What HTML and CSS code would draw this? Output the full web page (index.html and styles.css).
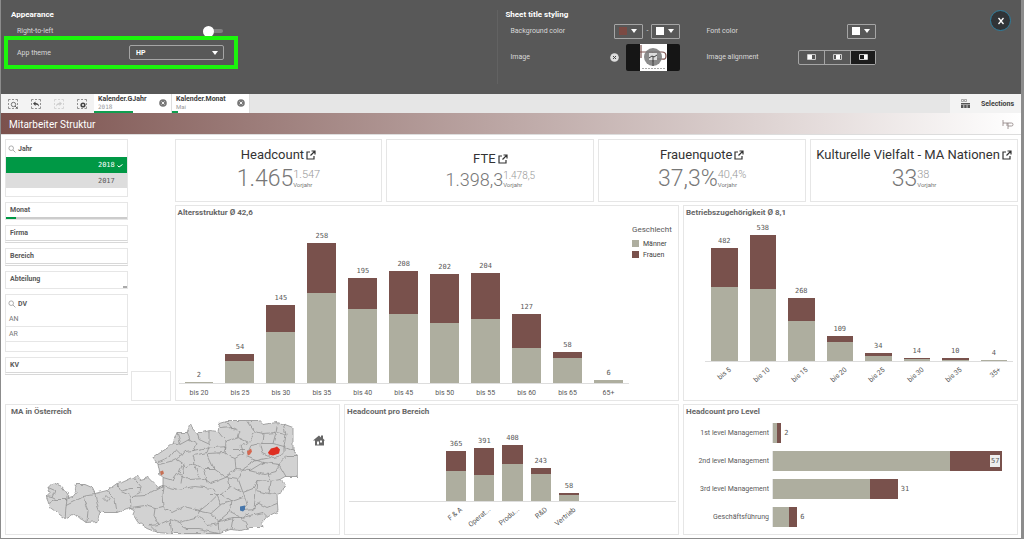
FILE: index.html
```html
<!DOCTYPE html>
<html lang="de">
<head>
<meta charset="utf-8">
<title>Mitarbeiter Struktur</title>
<link rel="stylesheet" href="styles.css">
</head>
<body>
<svg class="defs" aria-hidden="true">
  <symbol id="search" viewBox="0 0 8 8"><circle cx="3.2" cy="3.2" r="2.3" fill="none" stroke="currentColor" stroke-width=".8"/><path d="M5 5l2.4 2.4" stroke="currentColor" stroke-width=".8"/></symbol>
  <symbol id="open" viewBox="0 0 10 10"><path d="M4 2H1v7h7V6M5.500 1H9v3.500M9 1L4.500 5.500" fill="none" stroke="currentColor" stroke-width="1.2"/></symbol>
  <symbol id="frame" viewBox="0 0 10 10"><path d="M.5 2.500v-2h2M4 .5h2M7.500 .5h2v2M9.500 4v2M9.500 7.500v2h-2M6 9.500H4M2.500 9.500h-2v-2M.5 6V4" fill="none" stroke="currentColor" stroke-width=".8"/></symbol>
  <symbol id="clear" viewBox="0 0 8 8"><circle cx="4" cy="4" r="3.800" fill="currentColor"/><path d="M2.600 2.600l2.800 2.800M5.400 2.600L2.600 5.400" stroke="#fff" stroke-width=".9"/></symbol>
</svg>

<header class="settings">
  <section class="appearance">
    <h2>Appearance</h2>
    <div class="field rtl"><label for="rtl">Right-to-left</label><input id="rtl" class="switch" type="checkbox"></div>
    <div class="highlight field">
      <label for="theme">App theme</label>
      <span class="select"><select id="theme"><option>HP</option></select></span>
    </div>
  </section>
  <section class="styling">
    <h2>Sheet title styling</h2>
    <div class="fields">
      <div class="field"><span>Background color</span>
        <div class="group"><button class="color" aria-label="Start color"><i class="swatch brown"></i><i class="caret"></i></button><span>-</span><button class="color" aria-label="End color"><i class="swatch"></i><i class="caret"></i></button></div>
      </div>
      <div class="field"><span>Font color</span><button class="color" aria-label="Font color"><i class="swatch"></i><i class="caret"></i></button></div>
      <div class="field"><span>Image</span>
        <div class="group image">
          <button class="plain" aria-label="Remove image"><svg width="9" height="9" viewBox="0 0 9 9"><circle cx="4.500" cy="4.500" r="4.300" fill="#ddd"/><path d="M3 3l3 3M6 3L3 6" stroke="#444"/></svg></button>
          <button class="thumb" aria-label="Choose image"><svg width="27" height="27" viewBox="0 0 27 27"><path fill="#fff" d="M0 0h27v27H0z"/><path d="M1 1v13M0 8h13v10M14 8h8q4 0 4 4t-4 3h-9" fill="none" stroke="#7b514d" stroke-width="1.200"/><circle cx="13" cy="13" r="9" fill="#777" opacity=".85"/><path d="M9 9h8v7H9z" fill="#ddd"/><path d="M9 14l3-2 2 1 3-2M13 12v10" stroke="#444" fill="none"/><path d="M2 24.500h23" stroke="#aaa" stroke-dasharray="2 1"/></svg></button>
        </div>
      </div>
      <div class="field"><span>Image alignment</span>
        <div class="segments">
          <button aria-label="Left"><svg width="9" height="6"><path d="M.5 .5h8v5h-8z" fill="none" stroke="#ccc"/><path d="M1 1h4v4H1z" fill="#fff"/></svg></button>
          <button aria-label="Center"><svg width="9" height="6"><path d="M.5 .5h8v5h-8z" fill="none" stroke="#ccc"/><path d="M3 1h4v4H3z" fill="#fff"/></svg></button>
          <button class="on" aria-label="Right"><svg width="9" height="6"><path d="M.5 .5h8v5h-8z" fill="none" stroke="#ccc"/><path d="M5 1h3v4H5z" fill="#fff"/></svg></button>
        </div>
      </div>
    </div>
  </section>
  <button class="close" aria-label="Close"><svg width="8" height="8" viewBox="0 0 8 8"><path d="M1.500 1l5 6M6.500 1l-5 6" stroke="#fff" stroke-width="1.300"/></svg></button>
</header>

<nav class="selections">
  <div class="tools">
    <button class="plain" aria-label="Smart search"><svg width="10" height="10"><use href="#frame"/><circle cx="5.500" cy="5.500" r="2.200" fill="#f3f3f3" stroke="#666" stroke-width=".9"/><path d="M7 7l2.500 2.500" stroke="#666"/></svg></button>
    <button class="plain" aria-label="Step back"><svg width="10" height="10"><use href="#frame"/><path d="M2 4.500L4.500 2.500V4q3.500 0 3.500 3.500Q7 5.500 4.500 5.500V7z" fill="#444"/></svg></button>
    <button class="plain faint" aria-label="Step forward"><svg width="10" height="10"><use href="#frame"/><path d="M8 4.500L5.500 2.500V4Q2 4 2 7.500q1-2 3.500-2V7z" fill="currentColor"/></svg></button>
    <button class="plain" aria-label="Clear all"><svg width="10" height="10"><use href="#frame"/><circle cx="6" cy="6" r="2.600" fill="#444"/><path d="M5 5l2 2M7 5L5 7" stroke="#fff" stroke-width=".7"/></svg></button>
  </div>
  <div class="pick"><div><b>Kalender.GJahr</b><small class="mono">2018</small></div><button class="plain" aria-label="Clear year"><svg width="8" height="8"><use href="#clear"/></svg></button><i class="half"></i></div>
  <div class="pick"><div><b>Kalender.Monat</b><small>Mai</small></div><button class="plain" aria-label="Clear month"><svg width="8" height="8"><use href="#clear"/></svg></button><i class="twelfth"></i></div>
  <button class="all"><svg width="9" height="9" viewBox="0 0 9 9"><path d="M.5 .5h2v2h-2zM3.500 .5h2v2h-2z" fill="none" stroke="#888" stroke-width=".7"/><path d="M0 4h9v1.500H0zM0 6h2.500v3H0zM3.200 6h2.500v3H3.200zM6.400 6H9v3H6.400z" fill="#555"/></svg>Selections</button>
</nav>

<div class="titlebar">
  <h1>Mitarbeiter Struktur</h1>
  <svg width="12" height="9" viewBox="0 0 12 9"><path d="M1 0v6M1 3h5M6 9V3h3.500Q11 3 11 4.500T9.500 6H6M5 3v3" fill="none" stroke="#8b7f7d" stroke-width=".8"/></svg>
</div>

<main class="sheet">
  <aside class="side">
    <div class="filters">
      <section class="list card">
        <h3><svg width="8" height="8"><use href="#search"/></svg>Jahr</h3>
        <button class="year mono sel">2018<svg width="6" height="5" viewBox="0 0 6 5"><path d="M.5 2.500L2 4l3.500-2.500" stroke="#fff" fill="none"/></svg></button>
        <button class="year mono alt">2017</button>
      </section>
      <button class="filter card">Monat<i class="meter"></i></button>
      <button class="filter card line">Firma</button>
      <button class="filter card line">Bereich</button>
      <button class="filter card stub">Abteilung</button>
      <section class="list card">
        <h3><svg width="8" height="8"><use href="#search"/></svg>DV</h3>
        <button class="item">AN</button>
        <button class="item">AR</button>
      </section>
      <button class="filter card line">KV</button>
    </div>
    <div class="blank card"></div>
  </aside>

  <section class="kpis">
    <article class="kpi card"><h2>Headcount<svg width="10" height="10"><use href="#open"/></svg></h2><div class="num"><strong>1.465</strong><span><em>1.547</em><small>Vorjahr</small></span></div></article>
    <article class="kpi card medium"><h2>FTE<svg width="10" height="10"><use href="#open"/></svg></h2><div class="num"><strong>1.398,3</strong><span><em>1.478,5</em><small>Vorjahr</small></span></div></article>
    <article class="kpi card"><h2>Frauenquote<svg width="10" height="10"><use href="#open"/></svg></h2><div class="num"><strong>37,3%</strong><span><em>40,4%</em><small>Vorjahr</small></span></div></article>
    <article class="kpi card"><h2>Kulturelle Vielfalt - MA Nationen<svg width="10" height="10"><use href="#open"/></svg></h2><div class="num"><strong>33</strong><span><em>38</em><small>Vorjahr</small></span></div></article>
  </section>

  <section class="card chart age">
    <h2>Altersstruktur Ø 42,6</h2>
    <div class="with-legend">
      <div class="bars">
        <div class="plot mono">
          <div><span>2</span><i class="m" style="height:0.600%"></i></div>
          <div><span>54</span><i class="f" style="height:4.300%"></i><i class="m" style="height:13.600%"></i></div>
          <div><span>145</span><i class="f" style="height:17.100%"></i><i class="m" style="height:31.300%"></i></div>
          <div><span>258</span><i class="f" style="height:30.900%"></i><i class="m" style="height:55.300%"></i></div>
          <div><span>195</span><i class="f" style="height:19.300%"></i><i class="m" style="height:45.700%"></i></div>
          <div><span>208</span><i class="f" style="height:26.400%"></i><i class="m" style="height:42.900%"></i></div>
          <div><span>202</span><i class="f" style="height:30.300%"></i><i class="m" style="height:37%"></i></div>
          <div><span>204</span><i class="f" style="height:28.200%"></i><i class="m" style="height:39.800%"></i></div>
          <div><span>127</span><i class="f" style="height:20.500%"></i><i class="m" style="height:21.800%"></i></div>
          <div><span>58</span><i class="f" style="height:3.900%"></i><i class="m" style="height:15.200%"></i></div>
          <div><span>6</span><i class="m" style="height:1.800%"></i></div>
        </div>
        <div class="ticks"><span>bis 20</span><span>bis 25</span><span>bis 30</span><span>bis 35</span><span>bis 40</span><span>bis 45</span><span>bis 50</span><span>bis 55</span><span>bis 60</span><span>bis 65</span><span>65+</span></div>
      </div>
      <ul class="legend"><li class="head">Geschlecht</li><li><i class="m"></i>Männer</li><li><i class="f"></i>Frauen</li></ul>
    </div>
  </section>

  <section class="card chart tenure">
    <h2>Betriebszugehörigkeit Ø 8,1</h2>
    <div class="bars">
      <div class="plot mono">
        <div><span>482</span><i class="f" style="height:27.500%"></i><i class="m" style="height:53%"></i></div>
        <div><span>538</span><i class="f" style="height:38.500%"></i><i class="m" style="height:51.400%"></i></div>
        <div><span>268</span><i class="f" style="height:16.200%"></i><i class="m" style="height:28.700%"></i></div>
        <div><span>109</span><i class="f" style="height:4.700%"></i><i class="m" style="height:13.400%"></i></div>
        <div><span>34</span><i class="f" style="height:2.100%"></i><i class="m" style="height:3.700%"></i></div>
        <div><span>14</span><i class="f" style="height:0.700%"></i><i class="m" style="height:1.600%"></i></div>
        <div><span>10</span><i class="f" style="height:0.900%"></i><i class="m" style="height:1%"></i></div>
        <div><span>4</span><i class="f" style="height:0.500%"></i><i class="m" style="height:0.400%"></i></div>
      </div>
      <div class="ticks slanted"><span><b>bis 5</b></span><span><b>bis 10</b></span><span><b>bis 15</b></span><span><b>bis 20</b></span><span><b>bis 25</b></span><span><b>bis 30</b></span><span><b>bis 35</b></span><span><b>35+</b></span></div>
    </div>
  </section>

  <section class="card chart map">
    <h2>MA in Österreich</h2>
    <svg class="austria" viewBox="6 420 333 114" role="img" aria-label="Karte von Österreich">
      <filter id="rough" x="0" y="0" width="1" height="1"><feTurbulence type="fractalNoise" baseFrequency=".15" numOctaves="2" seed="4"/><feDisplacementMap in="SourceGraphic" scale="4" xChannelSelector="R" yChannelSelector="G"/></filter>
      <g filter="url(#rough)" stroke="#929292" stroke-width=".8" stroke-linejoin="round">
        <path fill="#d2d2d2" d="M46 497L50 493 48 488 53 483 62 487 68 495 67 498 73 497 77 492 75 485 85 485 92 488 95 494 107 491 117 484 122 483 133 478 137 477 140 480 148 478 153 483 157 488 163 486 163 478 160 475 158 465 153 458 162 452 168 448 173 443 177 433 187 433 190 425 197 433 202 433 210 431 218 432 220 423 227 421 258 421 262 425 277 423 285 425 293 428 293 450 298 458 298 477 285 477 280 480 285 485 282 493 277 495 278 512 267 517 262 523 263 528 250 528 240 531 230 530 220 534 170 534 157 533 147 529 138 523 133 515 135 510 131 508 117 513 100 513 97 522 87 523 83 520 72 515 65 519 50 508 48 502Z"/>
        <path fill="none" d="M48 488L55 491 52 498 46 497M52 498L56 500 67 500M56 500L49 504M67 498L66 508 65 519M66 506L80 499 83 496 95 494M83 496L85 504 88 511 87 523M95 494L97 505 100 513M106 496L109 499 107 502 104 499ZM107 491L115 500 117 513M117 484L121 492 130 496 131 508M122 492L130 489 140 489M133 478L141 487 140 493 132 497M132 497L145 496 163 486M131 508L145 506 155 509 163 507M163 486L162 496 163 507M155 509L154 516 159 525 150 526 157 533M163 507L172 513 184 507 200 511 195 519 179 523 170 520 159 525M170 520L172 534M163 486L178 490 194 487 214 489 217 496 210 503 200 511M163 478L173 481 178 474 190 480 204 479 211 484 228 477 230 487 221 495 210 495M158 465L170 462 176 459 183 464 179 473M158 462L170 457 176 450 182 456 176 459M173 443L181 445 190 440 197 444 194 451 185 452 182 456M177 433L181 445M190 440L187 433M197 433L199 440 210 445 207 453 193 456 195 463 185 469M193 451L203 449 226 447 224 453 208 454M209 431L209 444M218 432L226 442 238 438 240 432 232 428 220 429M238 438L249 443 255 432 248 422M255 432L263 434 262 444 251 446M263 434L276 433 273 444 262 444M276 433L278 424M276 433L286 435 283 424M286 435L284 447 294 451M273 444L284 447 284 455 273 458 262 453 260 446M226 442L225 455 235 459 243 454 240 446 249 443M251 446L246 457 256 461 271 458M235 459L236 470 225 477 214 469 207 454M214 469L203 469 194 464 199 478M225 477L238 479 244 469 256 461M236 470L250 471 263 463 256 461M263 463L279 465 276 472 265 475 249 471M279 465L287 457 297 457M279 465L286 477M238 479L243 493 253 489 257 481 270 482 268 473M257 481L256 491 268 494 270 482 280 480M268 494L277 495M256 491L255 502 267 508 277 504M243 493L247 505 243 510 254 509 255 502M243 493L230 487M221 495L232 502 243 498M217 496L221 505 232 502 230 512 242 518 253 510M221 505L211 514 218 522 230 512M211 514L197 511M218 522L219 534M218 522L233 518 231 530M233 518L242 518 248 529M242 518L263 513 267 517M253 510L260 502M179 523L185 530 199 530 218 534M184 464L181 484M203 469L207 483M226 421L234 431M232 450L246 450M199 516L208 526 219 524"/>
      </g>
      <path fill="#df2f22" d="M268 453l3-4 4-1 2-1 3 3-1 4-6 2-4-1z"/><path fill="#d56850" d="M247 452l4-3 1 3-2 3-2 1z"/><path fill="#c76f54" d="M160 472l3-1 1 3-3 2z"/><path fill="#4676ab" d="M240 507l5-1v4l-2 2-3-1z"/>
      <path fill="#666" d="M313 441l6-5 2 2v-2h2v3l2 2h-1v5h-9v-5zM317 442v3h2v-3zM320 441v2h2v-2z" fill-rule="evenodd"/>
    </svg>
  </section>

  <section class="card chart area">
    <h2>Headcount pro Bereich</h2>
    <div class="bars">
      <div class="plot mono">
        <div><span>365</span><i class="f" style="height:25%"></i><i class="m" style="height:36.600%"></i></div>
        <div><span>391</span><i class="f" style="height:33.300%"></i><i class="m" style="height:32.500%"></i></div>
        <div><span>408</span><i class="f" style="height:22.600%"></i><i class="m" style="height:46%"></i></div>
        <div><span>243</span><i class="f" style="height:7.400%"></i><i class="m" style="height:33.700%"></i></div>
        <div><span>58</span><i class="f" style="height:3%"></i><i class="m" style="height:7%"></i></div>
      </div>
      <div class="ticks slanted"><span><b>F &amp; A</b></span><span><b>Operat...</b></span><span><b>Produ...</b></span><span><b>R&amp;D</b></span><span><b>Vertrieb</b></span></div>
    </div>
  </section>

  <section class="card chart level">
    <h2>Headcount pro Level</h2>
    <div class="rows">
      <span>1st level Management</span><div><i class="m" style="width:1.700%"></i><i class="f" style="width:1.700%"></i><b>2</b></div>
      <span>2nd level Management</span><div><i class="m" style="width:73.900%"></i><i class="f" style="width:21.700%"><b>57</b></i></div>
      <span>3rd level Management</span><div><i class="m" style="width:40.300%"></i><i class="f" style="width:11.700%"></i><b>31</b></div>
      <span>Geschäftsführung</span><div><i class="m" style="width:6.700%"></i><i class="f" style="width:3.400%"></i><b>6</b></div>
    </div>
  </section>
</main>
</body>
</html>
```
FILE: styles.css
```css
* { box-sizing: border-box; }
body {
  margin: 0;
  min-height: 100vh;
  display: flex;
  flex-direction: column;
  border: solid #8c8c8c;
  border-width: 0 3px 1px 1px;
  background: #fff;
  color: #595959;
  font: 7px/10px Roboto, "Liberation Sans", sans-serif;
}
h1, h2, h3, ul { margin: 0; padding: 0; font-size: inherit; list-style: none; }
button, select, input { margin: 0; padding: 0; border: 0; background: none; color: inherit; font: inherit; }
svg { display: block; flex: none; }
i, em { font-style: normal; }
.defs { position: absolute; width: 0; height: 0; }
.mono { font-family: "DejaVu Sans Mono", monospace; }
.plain { display: flex; }

/* settings panel */
.settings {
  position: relative;
  display: grid;
  grid-template-columns: 49fr 52fr;
  height: 94px;
  padding: 10px 0 10px 3px;
  background: #585858;
  color: #d8d8d8;
}
.settings h2 { color: #fff; font-size: 8px; }
.field { display: flex; align-items: center; justify-content: space-between; }
.appearance h2 { padding-left: 7px; }
.rtl { width: 219px; height: 16px; padding-left: 13px; margin-top: 3px; }
.switch { appearance: none; display: flex; align-items: center; width: 20px; height: 4px; border-radius: 2px; background: #808080; }
.switch::before { content: ""; width: 11px; height: 11px; border-radius: 50%; background: #fff; }
.highlight { position: relative; width: 234px; height: 33px; margin-top: -3px; padding: 0 10px 0 9px; border: 4px solid #1cf50c; }
.select { position: relative; width: 95px; }
.select select { appearance: none; width: 100%; height: 15px; padding-left: 6px; border: 1px solid #a5a5a5; border-radius: 2px; color: #fff; font-weight: bold; }
.select::after { content: ""; position: absolute; right: 6px; top: 6px; border: solid transparent; border-width: 4px 3px 0; border-top-color: #fff; }
.styling { border-left: 1px solid #626262; padding-left: 7px; }
.fields { display: grid; grid-template-columns: 170px 170px; grid-template-rows: 22px 28px; gap: 1px 26px; padding: 0 0 0 5px; }
.group { display: flex; align-items: center; gap: 3px; }
.group.image { gap: 7px; }
.color { display: flex; align-items: center; justify-content: space-between; width: 29px; height: 15px; padding: 0 5px 0 4px; border: 1px solid #a5a5a5; border-radius: 1px; }
.swatch { width: 8px; height: 8px; background: #fff; }
.swatch.brown { background: #7b4a43; }
.caret { border: solid transparent; border-width: 4px 3px 0; border-top-color: #fff; }
.thumb { display: flex; justify-content: center; width: 54px; height: 27px; border-radius: 2px; background: #151515; }
.segments { display: flex; width: 78px; height: 15px; border: 1px solid #a5a5a5; border-radius: 2px; }
.segments button { flex: 1; display: flex; align-items: center; justify-content: center; border-right: 1px solid #a5a5a5; }
.segments .on { border: 0; background: #1c1c1c; }
.close { position: absolute; right: 10px; top: 10px; display: flex; align-items: center; justify-content: center; width: 21px; height: 21px; border: 1px solid #2f7f9f; border-radius: 50%; background: #303437; }

/* selections bar */
.selections { display: flex; height: 19px; background: #e6e6e6; }
.tools { display: flex; align-items: center; justify-content: space-between; width: 93px; padding: 0 7px; background: #f3f3f3; color: #777; }
.faint { color: #ccc; }
.pick { position: relative; display: flex; align-items: center; justify-content: space-between; width: 78px; padding: 0 4px 1px 4px; border-right: 1px solid #ddd; background: #fff; color: #777; }
.pick b, .pick small { display: block; line-height: 7px; }
.pick b { color: #404040; }
.pick small { font-size: 6px; color: #999; }
.pick i { position: absolute; left: 0; bottom: 0; height: 2px; background: #109e50; }
.half { width: 50%; }
.twelfth { width: 8%; }
.all { display: flex; align-items: center; gap: 11px; margin-left: auto; padding: 0 7px 0 11px; background: #f3f3f3; color: #404040; font-weight: bold; }
.titlebar { display: flex; align-items: center; justify-content: space-between; height: 22px; padding: 2px 7px 0 8px; border-bottom: 1px solid #ddd; background: linear-gradient(90deg, #7b514d, #fff); }
h1 { color: #fff; font-size: 10px; font-weight: normal; line-height: 14px; }

/* sheet */
.sheet { flex: 1; display: grid; grid-template-columns: repeat(12, 1fr); grid-template-rows: 63px 196px minmax(130px, 1fr); gap: 3px 4px; padding: 4px 3px 3px 4px; }
.card { min-width: 0; border: 1px solid #e6e6e6; background: #fff; }
.side { grid-area: 1 / 1 / 3 / 3; display: flex; align-items: flex-end; gap: 3px; }
.filters { flex: 1; align-self: stretch; display: flex; flex-direction: column; gap: 5px; }
.blank { flex: 0 0 24%; height: 30px; }
.list { display: flex; flex-direction: column; height: 58px; }
.list h3 { display: flex; align-items: center; gap: 2px; height: 17px; padding-left: 2px; }
.list h3 svg { color: #999; }
.year { display: flex; align-items: center; justify-content: flex-end; gap: 2px; height: 16px; padding-right: 4px; }
.sel { background: #009845; color: #fff; }
.alt { height: 15px; padding-right: 12px; background: #ddd; }
.item { height: 15px; padding-left: 3px; border-bottom: 1px solid #e6e6e6; text-align: left; color: #777; }
.filter { position: relative; height: 18px; padding: 0 4px 2px; text-align: left; font-weight: bold; }
.filter.line { border-bottom: 3px double #d8d8d8; padding-bottom: 0; }
.meter { position: absolute; inset: auto 0 0; height: 2px; background: linear-gradient(90deg, #009845 8%, #ccc 8%); }
.stub::after { content: ""; position: absolute; right: 0; bottom: 0; width: 4px; height: 2px; background: #aaa; }

.kpis { grid-area: 1 / 3 / 2 / 13; display: grid; grid-template-columns: repeat(4, 1fr); gap: 4px; }
.kpi { display: flex; flex-direction: column; align-items: center; padding-top: 6px; }
.kpi h2 { display: flex; align-items: center; gap: 2px; color: #333; font-size: 13px; line-height: 18px; font-weight: normal; white-space: nowrap; }
.num { display: flex; align-items: center; line-height: 30px; color: #777; }
.num strong { font-size: 23px; font-weight: 300; }
.num em { display: block; font-size: 11px; line-height: 12px; font-weight: 300; color: #999; }
.num small { display: block; font-size: 6px; line-height: 8px; }
.medium { padding-top: 10px; }
.medium .num { line-height: 24px; }
.medium .num strong { font-size: 18px; }
.medium .num em { font-size: 10px; line-height: 10px; }

.age { grid-column: 3 / 9; }
.tenure { grid-column: 9 / 13; }
.map { grid-column: 1 / 5; }
.area { grid-column: 5 / 9; }
.level { grid-column: 9 / 13; }
.chart { display: flex; flex-direction: column; overflow: hidden; }
.chart h2 { height: 15px; padding: 1px 2px; font-size: 8px; line-height: 12px; color: #666; }
.map h2 { padding-left: 5px; height: 14px; }
.m { background: #aeae9f; }
.f { background: #79514c; }
.with-legend { flex: 1; display: flex; padding-left: 3px; }
.with-legend .bars { padding: 0; }
.bars { flex: 1; display: flex; flex-direction: column; }
.plot { flex: 1; display: flex; border-bottom: 1px solid #ddd; }
.plot > div { flex: 1; display: flex; flex-direction: column; justify-content: flex-end; padding: 0 6px; }
.plot span { line-height: 13px; text-align: center; }
.plot i { flex: none; }
.ticks { display: flex; height: 16px; }
.ticks span { flex: 1; line-height: 18px; text-align: center; white-space: nowrap; }
.legend { width: 49px; padding-left: 3px; color: #404040; white-space: nowrap; }
.legend li { display: flex; align-items: center; gap: 4px; height: 11px; }
.legend .head { height: 17px; font-size: 8px; color: #595959; }
.legend i { width: 7px; height: 7px; }
.tenure .bars { padding: 0 4px 0 21px; }
.ticks.slanted { height: 38px; padding-top: 3px; }
.slanted span { display: flex; justify-content: flex-end; width: 0; line-height: 10px; }
.slanted b { align-self: flex-start; margin-right: 42%; font-weight: normal; transform: rotate(-40deg); transform-origin: 100% 0; }
.area .bars { padding: 0 2px 0 4px; }
.area .plot, .area .ticks { padding-left: 93px; padding-right: 93px; }
.area .plot > div { padding: 0 4px; }
.area .ticks { height: 32px; }
.austria { flex: 1; width: 100%; min-height: 0; }
.rows { display: grid; grid-template-columns: 88px 1fr; grid-template-rows: repeat(4, 28px); align-items: center; margin-top: -1px; padding-right: 4px; }
.rows > span { padding-right: 3px; text-align: right; white-space: nowrap; }
.rows > div { display: flex; align-items: center; height: 20px; border-left: 1px solid #e6e6e6; }
.rows i { display: flex; align-items: center; justify-content: flex-end; height: 100%; }
.rows b { margin-left: 3px; font: 7px/10px "DejaVu Sans Mono", monospace; }
.rows i b { margin: 0 2px 0 0; padding: 1px; background: #eee; }
```
